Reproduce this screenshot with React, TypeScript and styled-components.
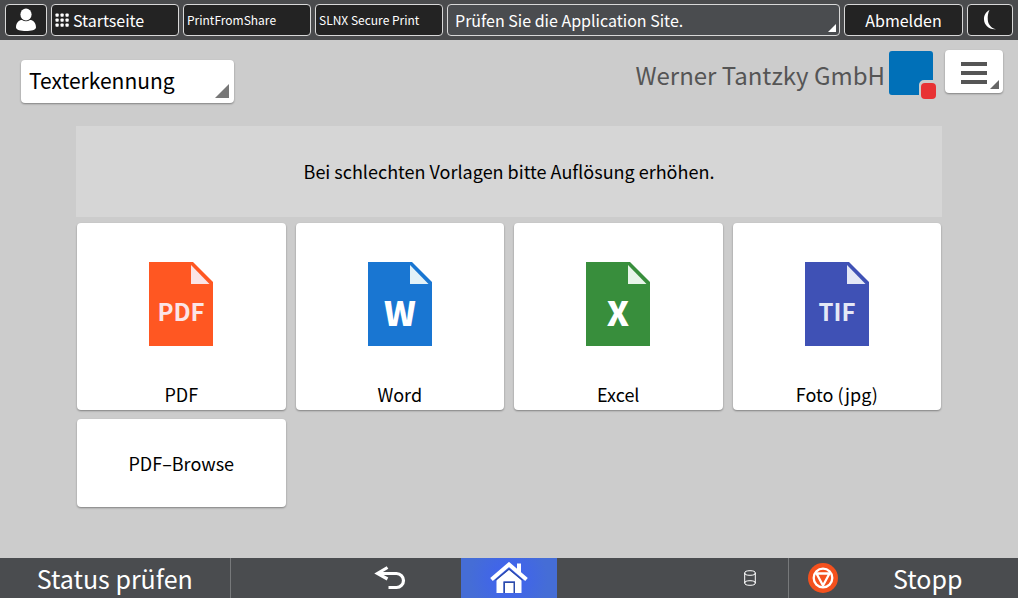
import React from "react";
import styled, { createGlobalStyle } from "styled-components";

const GlobalStyle = createGlobalStyle`
  *, *::before, *::after { box-sizing: border-box; }
  body { margin: 0; background: #cccccc; }
  body, button, select {
    font-family: "Noto Sans CJK JP", "Noto Sans", sans-serif;
  }
  button, select { margin: 0; border: 0; cursor: pointer; }
  svg { display: block; flex: none; }
`;

const Screen = styled.div`
  min-height: 100vh;
  display: flex;
  flex-direction: column;
  background: #cccccc;
  color: #000;
`;

const TopBar = styled.nav`
  display: flex;
  gap: 4px;
  padding: 4px 5px;
  background: #4a4b4d;
`;

const TopButton = styled.button<{ $width?: number; $small?: boolean; $align?: string }>`
  display: flex;
  align-items: center;
  justify-content: ${(p) => p.$align ?? "flex-start"};
  gap: 4px;
  flex: none;
  width: ${(p) => p.$width ?? 128}px;
  height: 32px;
  padding: 0 3px;
  border: 1px solid #d8d8d8;
  border-radius: 4px;
  background: #232323;
  color: #fff;
  font-size: ${(p) => (p.$small ? 12 : 16)}px;
  line-height: 24px;
  white-space: nowrap;
`;

const MessageButton = styled(TopButton)`
  position: relative;
  flex: 1;
  width: auto;
  min-width: 0;
  padding: 0 7px;
  background: #4a4c4f;
`;

const Corner = styled.span<{ $size: number; $color: string; $inset: number }>`
  position: absolute;
  right: ${(p) => p.$inset}px;
  bottom: ${(p) => p.$inset}px;
  width: ${(p) => p.$size}px;
  height: ${(p) => p.$size}px;
  background: ${(p) => p.$color};
  clip-path: polygon(100% 0, 100% 100%, 0 100%);
  pointer-events: none;
`;

const Header = styled.header`
  display: flex;
  align-items: flex-start;
  justify-content: space-between;
  padding: 10px 15px 23px 21px;
`;

const Picker = styled.div`
  position: relative;
  margin-top: 10px;
`;

const PickerSelect = styled.select`
  appearance: none;
  display: block;
  width: 213px;
  height: 43px;
  padding: 0 8px 3px;
  border-radius: 4px;
  background: #fff;
  box-shadow: 0 1px 2px #808080;
  color: #000;
  font-size: 21px;
  line-height: 32px;
`;

const Brand = styled.div`
  display: flex;
  align-items: flex-start;
`;

const BrandName = styled.span`
  margin-right: 4px;
  color: #555;
  font-size: 24px;
  line-height: 50px;
  white-space: nowrap;
`;

const MenuButton = styled.button`
  position: relative;
  display: flex;
  align-items: center;
  justify-content: center;
  width: 58px;
  height: 43px;
  margin-left: 8px;
  padding: 3px 0 0;
  border-radius: 4px;
  background: #fff;
  box-shadow: 0 1px 2px #808080;
`;

const Main = styled.main`
  flex: 1;
  padding: 0 76px 50px;
`;

const Notice = styled.p`
  margin: 0 0 6px;
  padding: 29px 16px 30px;
  background: #d6d6d6;
  font-size: 18px;
  line-height: 32px;
  text-align: center;
`;

const CardGrid = styled.div`
  display: grid;
  grid-template-columns: repeat(4, 1fr);
  gap: 9px 10px;
  padding: 0 1px;
`;

const Card = styled.button`
  display: flex;
  flex-direction: column;
  align-items: center;
  justify-content: center;
  min-height: 88px;
  padding: 0;
  border-radius: 4px;
  background: #fff;
  box-shadow: 0 1px 2px #808080;
  color: #000;
  font-size: 18px;
  line-height: 32px;
`;

const FileCard = styled(Card)`
  justify-content: space-between;
  padding: 39px 0 0;
  min-height: 187px;
`;

const Footer = styled.footer`
  display: grid;
  grid-template-columns: 1fr 96px 1fr;
  height: 40px;
  background: #4a4c4f;
`;

const FooterSide = styled.div`
  display: grid;
  grid-template-columns: 1fr 1fr;
`;

const FooterButton = styled.button<{ $divider?: "left" | "right" }>`
  display: flex;
  align-items: center;
  justify-content: center;
  padding: 0;
  border-left: ${(p) => (p.$divider === "left" ? "1px solid #77797b" : "0")};
  border-right: ${(p) => (p.$divider === "right" ? "1px solid #77797b" : "0")};
  background: transparent;
  color: #fff;
  font-size: 25px;
  line-height: 40px;
  white-space: nowrap;
`;

const BackButton = styled(FooterButton)`
  justify-content: flex-end;
  padding-right: 55px;
`;

const HomeButton = styled(FooterButton)`
  background: radial-gradient(circle, #3f62f0 10%, #456dd6 75%);
`;

const Storage = styled.div`
  display: flex;
  align-items: center;
  justify-content: flex-end;
  padding-right: 32px;
`;

const StopButton = styled(FooterButton)`
  padding-left: 19px;
`;

const StopLabel = styled.span`
  flex: 1;
  text-align: center;
`;

const UserIcon = () => (
  <svg width="22" height="24" viewBox="0 0 22 24" aria-hidden="true">
    <ellipse cx="11" cy="6.5" rx="5.6" ry="6" fill="#fff" />
    <path d="M1 19.5c0-5 3-7.5 6-7.5 2.500 1.600 5.500 1.600 8 0 3 0 6 2.500 6 7.500 0 2.500-5 3.500-10 3.500s-10-1-10-3.500z" fill="#fff" />
  </svg>
);

const GridIcon = () => (
  <svg width="14" height="14" viewBox="0 0 14 14" aria-hidden="true">
    {[0, 5, 10].map((y) => [0, 5, 10].map((x) => (
      <rect key={`${x}-${y}`} x={x + 0.5} y={y + 0.5} width="3.200" height="3.200" rx="0.800" fill="#fff" />
    )))}
  </svg>
);

const MoonIcon = () => (
  <svg width="14" height="22" viewBox="0 0 14 22" aria-hidden="true">
    <path d="M6.500 1C2.800 3 .8 6.500 1 10.500c.2 5.500 5 10.500 12 9.700-5-1.200-7.800-4.700-8.200-9.200C4.500 7.200 5 4 6.500 1z" fill="#fff" />
  </svg>
);

const BrandMark = () => (
  <svg width="48" height="50" viewBox="0 0 48 50" role="img" aria-label="Werner Tantzky">
    <path d="M3 1h38a3 3 0 0 1 3 3v26h-9a5 5 0 0 0-5 5v10H3a3 3 0 0 1-3-3V4a3 3 0 0 1 3-3z" fill="#0070b8" />
    <rect x="32" y="33" width="15" height="16" rx="4" fill="#e83234" />
  </svg>
);

const MenuIcon = () => (
  <svg width="26" height="22" viewBox="0 0 26 22" aria-hidden="true">
    <path d="M0 2h26M0 11h26M0 20h26" stroke="#555" strokeWidth="4" />
  </svg>
);

type FileKind = { tag: string; label: string; color: string; fold: string; size: number };

const fileKinds: FileKind[] = [
  { tag: "PDF", label: "PDF", color: "#ff5722", fold: "#fbe4e6", size: 24 },
  { tag: "W", label: "Word", color: "#1976d2", fold: "#e3f2f8", size: 34 },
  { tag: "X", label: "Excel", color: "#388e3c", fold: "#e8f5e9", size: 34 },
  { tag: "TIF", label: "Foto (jpg)", color: "#3f51b5", fold: "#e4e8f6", size: 24 },
];

const FileIcon = ({ kind }: { kind: FileKind }) => {
  const single = kind.tag.length === 1;
  return (
    <svg width="64" height="84" viewBox="0 0 64 84" aria-hidden="true">
      <path d="M0 0h44l20 20v64H0z" fill={kind.color} />
      <path d="M42 3v19h18.500z" fill={kind.fold} />
      <text
        x="32"
        y={single ? 64 : 59}
        textAnchor="middle"
        fontSize={kind.size}
        fontWeight={single ? 900 : 700}
        fill={single ? "#fff" : kind.fold}
      >
        {kind.tag}
      </text>
    </svg>
  );
};

const BackIcon = () => (
  <svg width="32" height="24" viewBox="0 0 32 24" fill="none" stroke="#fff" strokeWidth="3.200" aria-hidden="true">
    <path d="M5 7.500h17.500a7 7 0 0 1 0 14H14.500" />
    <path d="M13.500 1.500L3.500 7.500l10 5.500" />
  </svg>
);

const HomeIcon = () => (
  <svg width="38" height="32" viewBox="0 0 38 32" aria-hidden="true">
    <path d="M27 1.500h4v10l-4-4z" fill="#fff" />
    <path d="M1.500 17.500L19 2.500l17.500 15" fill="none" stroke="#fff" strokeWidth="4" />
    <path d="M6.500 18L19 7.800 31.500 18v13H25V19.500H13.500V31h-7z" fill="#fff" />
    <path d="M5.500 18.300L19 7l13.500 11.300" fill="none" stroke="#2c4aa8" strokeWidth="1.200" />
    <path d="M13.500 19.500H25V31H13.500z" fill="#2c4aa8" />
    <path d="M15 21h8.500v10H15z" fill="#fff" />
  </svg>
);

const StorageIcon = () => (
  <svg width="12" height="16" viewBox="0 0 12 16" fill="none" stroke="#fff" strokeWidth="1" aria-label="Speicher" role="img">
    <ellipse cx="6" cy="3" rx="5.300" ry="2.300" />
    <path d="M.7 3v10M11.300 3v10" />
    <ellipse cx="6" cy="13" rx="5.300" ry="2.300" />
  </svg>
);

const StopIcon = () => (
  <svg width="30" height="30" viewBox="0 0 30 30" aria-hidden="true">
    <circle cx="15" cy="15" r="15" fill="#f4511e" />
    <g fill="none" stroke="#fff" strokeWidth="2.300" strokeLinejoin="round">
      <circle cx="15" cy="15" r="9.300" />
      <path d="M8.500 10.500h13L15 22.500z" />
    </g>
  </svg>
);

export default function App() {
  return (
    <Screen>
      <GlobalStyle />
      <TopBar>
        <TopButton $width={42} $align="center" aria-label="Benutzer"><UserIcon /></TopButton>
        <TopButton><GridIcon />Startseite</TopButton>
        <TopButton $small>PrintFromShare</TopButton>
        <TopButton $small>SLNX Secure Print</TopButton>
        <MessageButton>
          Prüfen Sie die Application Site.
          <Corner $size={8} $color="#fff" $inset={3} />
        </MessageButton>
        <TopButton $width={119} $align="center">Abmelden</TopButton>
        <TopButton $width={46} $align="center" aria-label="Energiesparmodus"><MoonIcon /></TopButton>
      </TopBar>

      <Header>
        <Picker>
          <PickerSelect aria-label="Programm" defaultValue="Texterkennung">
            <option>Texterkennung</option>
          </PickerSelect>
          <Corner $size={14} $color="#777" $inset={5} />
        </Picker>
        <Brand>
          <BrandName>Werner Tantzky GmbH</BrandName>
          <BrandMark />
          <MenuButton aria-label="Menü">
            <MenuIcon />
            <Corner $size={9} $color="#666" $inset={4} />
          </MenuButton>
        </Brand>
      </Header>

      <Main>
        <Notice>Bei schlechten Vorlagen bitte Auflösung erhöhen.</Notice>
        <CardGrid>
          {fileKinds.map((kind) => (
            <FileCard key={kind.tag}>
              <FileIcon kind={kind} />
              {kind.label}
            </FileCard>
          ))}
          <Card>PDF–Browse</Card>
        </CardGrid>
      </Main>

      <Footer>
        <FooterSide>
          <FooterButton $divider="right">Status prüfen</FooterButton>
          <BackButton aria-label="Zurück"><BackIcon /></BackButton>
        </FooterSide>
        <HomeButton aria-label="Startseite"><HomeIcon /></HomeButton>
        <FooterSide>
          <Storage><StorageIcon /></Storage>
          <StopButton $divider="left">
            <StopIcon />
            <StopLabel>Stopp</StopLabel>
          </StopButton>
        </FooterSide>
      </Footer>
    </Screen>
  );
}
